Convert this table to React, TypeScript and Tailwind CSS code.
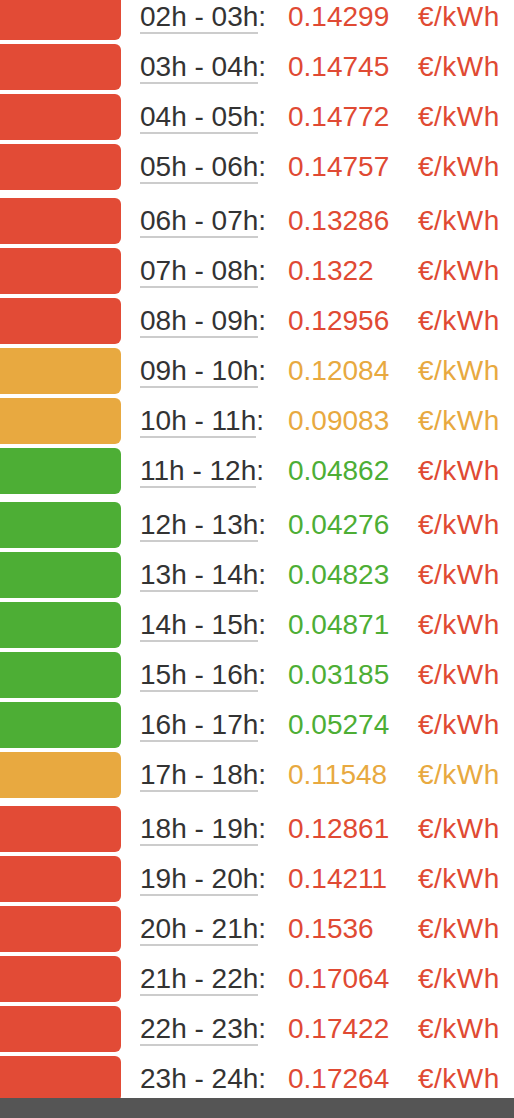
import React from "react";

type Level = "high" | "mid" | "low";

type Slot = {
  label: string;
  price: string;
  level: Level;
  plain?: boolean;
};

const groups: Slot[][] = [
  [
    { label: "02h - 03h", price: "0.14299", level: "high" },
    { label: "03h - 04h", price: "0.14745", level: "high" },
    { label: "04h - 05h", price: "0.14772", level: "high" },
    { label: "05h - 06h", price: "0.14757", level: "high" },
  ],
  [
    { label: "06h - 07h", price: "0.13286", level: "high" },
    { label: "07h - 08h", price: "0.1322", level: "high" },
    { label: "08h - 09h", price: "0.12956", level: "high" },
    { label: "09h - 10h", price: "0.12084", level: "mid" },
    { label: "10h - 11h", price: "0.09083", level: "mid" },
    { label: "11h - 12h", price: "0.04862", level: "low" },
  ],
  [
    { label: "12h - 13h", price: "0.04276", level: "low" },
    { label: "13h - 14h", price: "0.04823", level: "low" },
    { label: "14h - 15h", price: "0.04871", level: "low" },
    { label: "15h - 16h", price: "0.03185", level: "low" },
    { label: "16h - 17h", price: "0.05274", level: "low" },
    { label: "17h - 18h", price: "0.11548", level: "mid" },
  ],
  [
    { label: "18h - 19h", price: "0.12861", level: "high" },
    { label: "19h - 20h", price: "0.14211", level: "high" },
    { label: "20h - 21h", price: "0.1536", level: "high" },
    { label: "21h - 22h", price: "0.17064", level: "high" },
    { label: "22h - 23h", price: "0.17422", level: "high" },
    { label: "23h - 24h", price: "0.17264", level: "high", plain: true },
  ],
];

const barColor: Record<Level, string> = {
  high: "bg-[#e24b36]",
  mid: "bg-[#e8a940]",
  low: "bg-[#4dae35]",
};

const priceColor: Record<Level, string> = {
  high: "text-[#e04a33]",
  mid: "text-[#e8a940]",
  low: "text-[#4dae35]",
};

// green rows keep the unit in red, like the original page
const unitColor: Record<Level, string> = {
  high: "text-[#e04a33]",
  mid: "text-[#e8a940]",
  low: "text-[#e04a33]",
};

function PriceRow({ slot }: { slot: Slot }) {
  return (
    <div className="grid h-[46px] grid-cols-[121px_167px_130px_1fr] items-center">
      <div className={`h-full rounded-r-[6px] ${barColor[slot.level]}`} />
      <div className="pl-[19px] text-[#333]">
        <span className={slot.plain ? "" : "border-b-2 border-[#cccccc]"}>{slot.label}</span>:
      </div>
      <div className={priceColor[slot.level]}>{slot.price}</div>
      <div className={`tracking-[0.5px] ${unitColor[slot.level]}`}>€/kWh</div>
    </div>
  );
}

export default function App() {
  return (
    <div
      className="relative h-[1118px] overflow-hidden bg-white text-[28px] leading-none"
      style={{ fontFamily: '"Liberation Sans", Arial, sans-serif' }}
    >
      <div className="-mt-[6px] flex flex-col gap-2">
        {groups.map((group, gi) => (
          <div key={gi} className="flex flex-col gap-1">
            {group.map((slot) => (
              <PriceRow key={slot.label} slot={slot} />
            ))}
          </div>
        ))}
      </div>

      {/* bottom toolbar strip */}
      <div className="fixed inset-x-0 bottom-0 h-[20px] bg-[#555555]" />
    </div>
  );
}
